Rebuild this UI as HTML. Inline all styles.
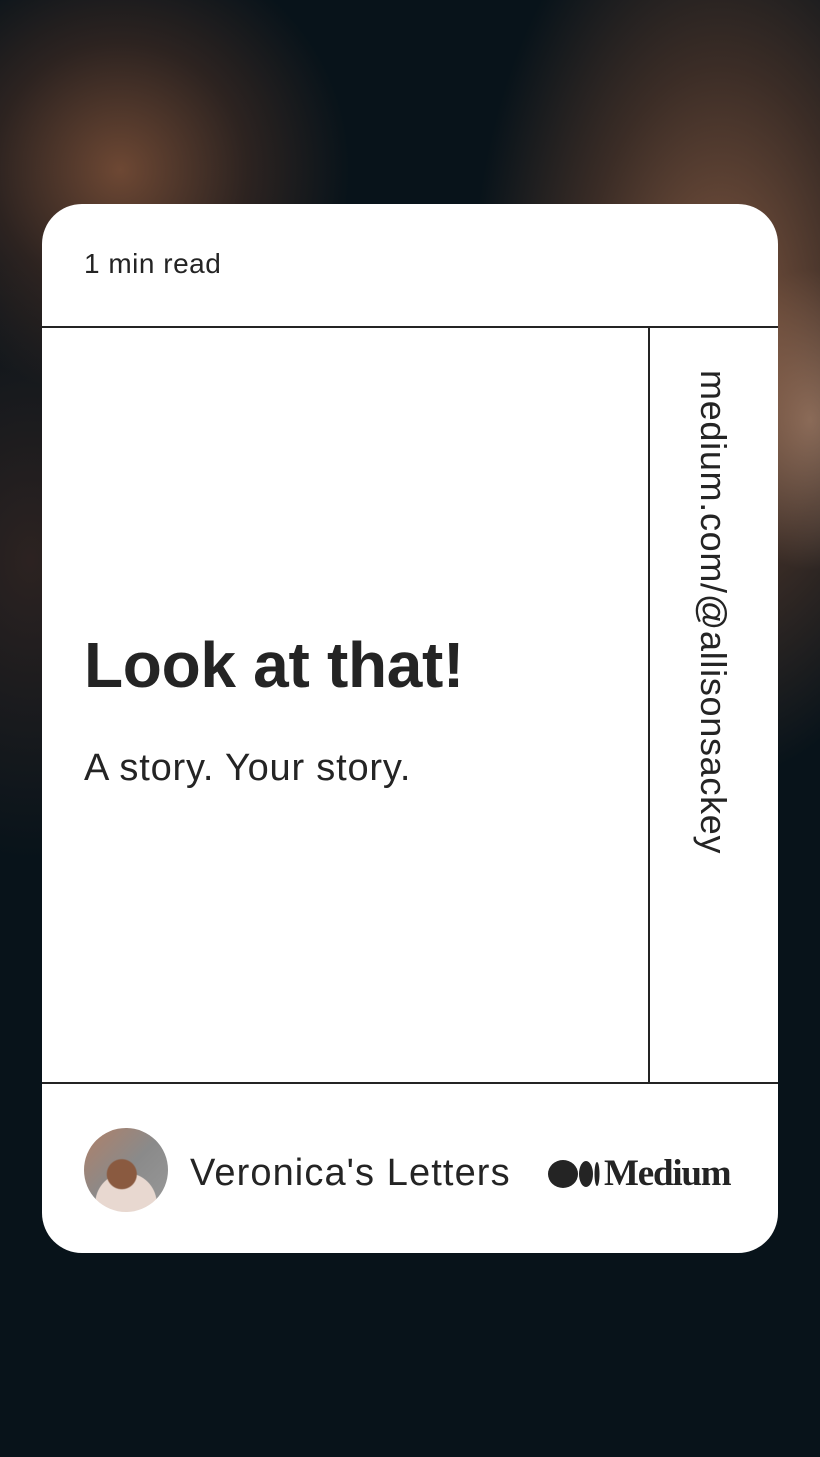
<!DOCTYPE html>
<html><head><meta charset="utf-8"><style>
*{margin:0;padding:0;box-sizing:border-box}
body{width:820px;height:1457px;overflow:hidden;position:relative;font-family:"Liberation Sans",sans-serif;color:#242424;
background:
radial-gradient(ellipse 230px 230px at 120px 170px,rgba(135,85,58,0.8),rgba(90,55,40,0.45) 55%,transparent 100%),
radial-gradient(ellipse 250px 460px at 720px 320px,rgba(150,100,72,0.85),rgba(110,70,50,0.5) 55%,transparent 100%),
radial-gradient(ellipse 100px 150px at 810px 420px,rgba(210,185,165,0.75),transparent 100%),
radial-gradient(ellipse 200px 300px at 30px 560px,rgba(80,50,40,0.5),transparent 100%),
#08131a;}
.card{position:absolute;left:42px;top:204px;width:736px;height:1049px;background:#fff;border-radius:40px;overflow:hidden}
.hl{position:absolute;left:0;width:736px;height:2px;background:#242424}
.vl{position:absolute;left:606px;top:123px;width:2px;height:756px;background:#242424}
.t1{position:absolute;left:42px;top:44px;font-size:28px;letter-spacing:0.5px}
.title{position:absolute;left:42px;top:424px;font-size:64px;font-weight:bold;letter-spacing:-0.3px}
.sub{position:absolute;left:42px;top:543px;font-size:38px;letter-spacing:0.8px}
.vert{position:absolute;left:650px;top:166px;font-size:36px;writing-mode:vertical-rl;white-space:nowrap;letter-spacing:0.7px}
.av{position:absolute;left:42px;top:924px;width:84px;height:84px;border-radius:50%;
background:radial-gradient(circle at 45% 55%,#8a5a40 0 22%,transparent 24%),radial-gradient(circle at 50% 90%,#e8d8d0 0 35%,transparent 36%),linear-gradient(135deg,#b08068,#8a8a8a 50%,#999 100%)}
.name{position:absolute;left:148px;top:948px;font-size:38px;letter-spacing:1.1px}
.logo{position:absolute;left:506px;top:948px;display:flex;align-items:center}
.logo span{font-family:"Liberation Serif",serif;font-weight:bold;font-size:37px;letter-spacing:-1.2px;margin-left:4px}
</style></head><body>
<div class="card">
<div class="t1">1 min read</div>
<div class="hl" style="top:122px"></div>
<div class="vl"></div>
<div class="hl" style="top:878px"></div>
<div class="title">Look at that!</div>
<div class="sub">A story. Your story.</div>
<div class="vert">medium.com/@allisonsackey</div>
<div class="av"></div>
<div class="name">Veronica's Letters</div>
<div class="logo"><svg width="52" height="30" viewBox="0 0 52 30"><ellipse cx="15" cy="15" rx="15" ry="14" fill="#242424"/><ellipse cx="38" cy="15" rx="7" ry="13" fill="#242424"/><ellipse cx="49" cy="15" rx="2.5" ry="12" fill="#242424"/></svg><span>Medium</span></div>
</div>
</body></html>
